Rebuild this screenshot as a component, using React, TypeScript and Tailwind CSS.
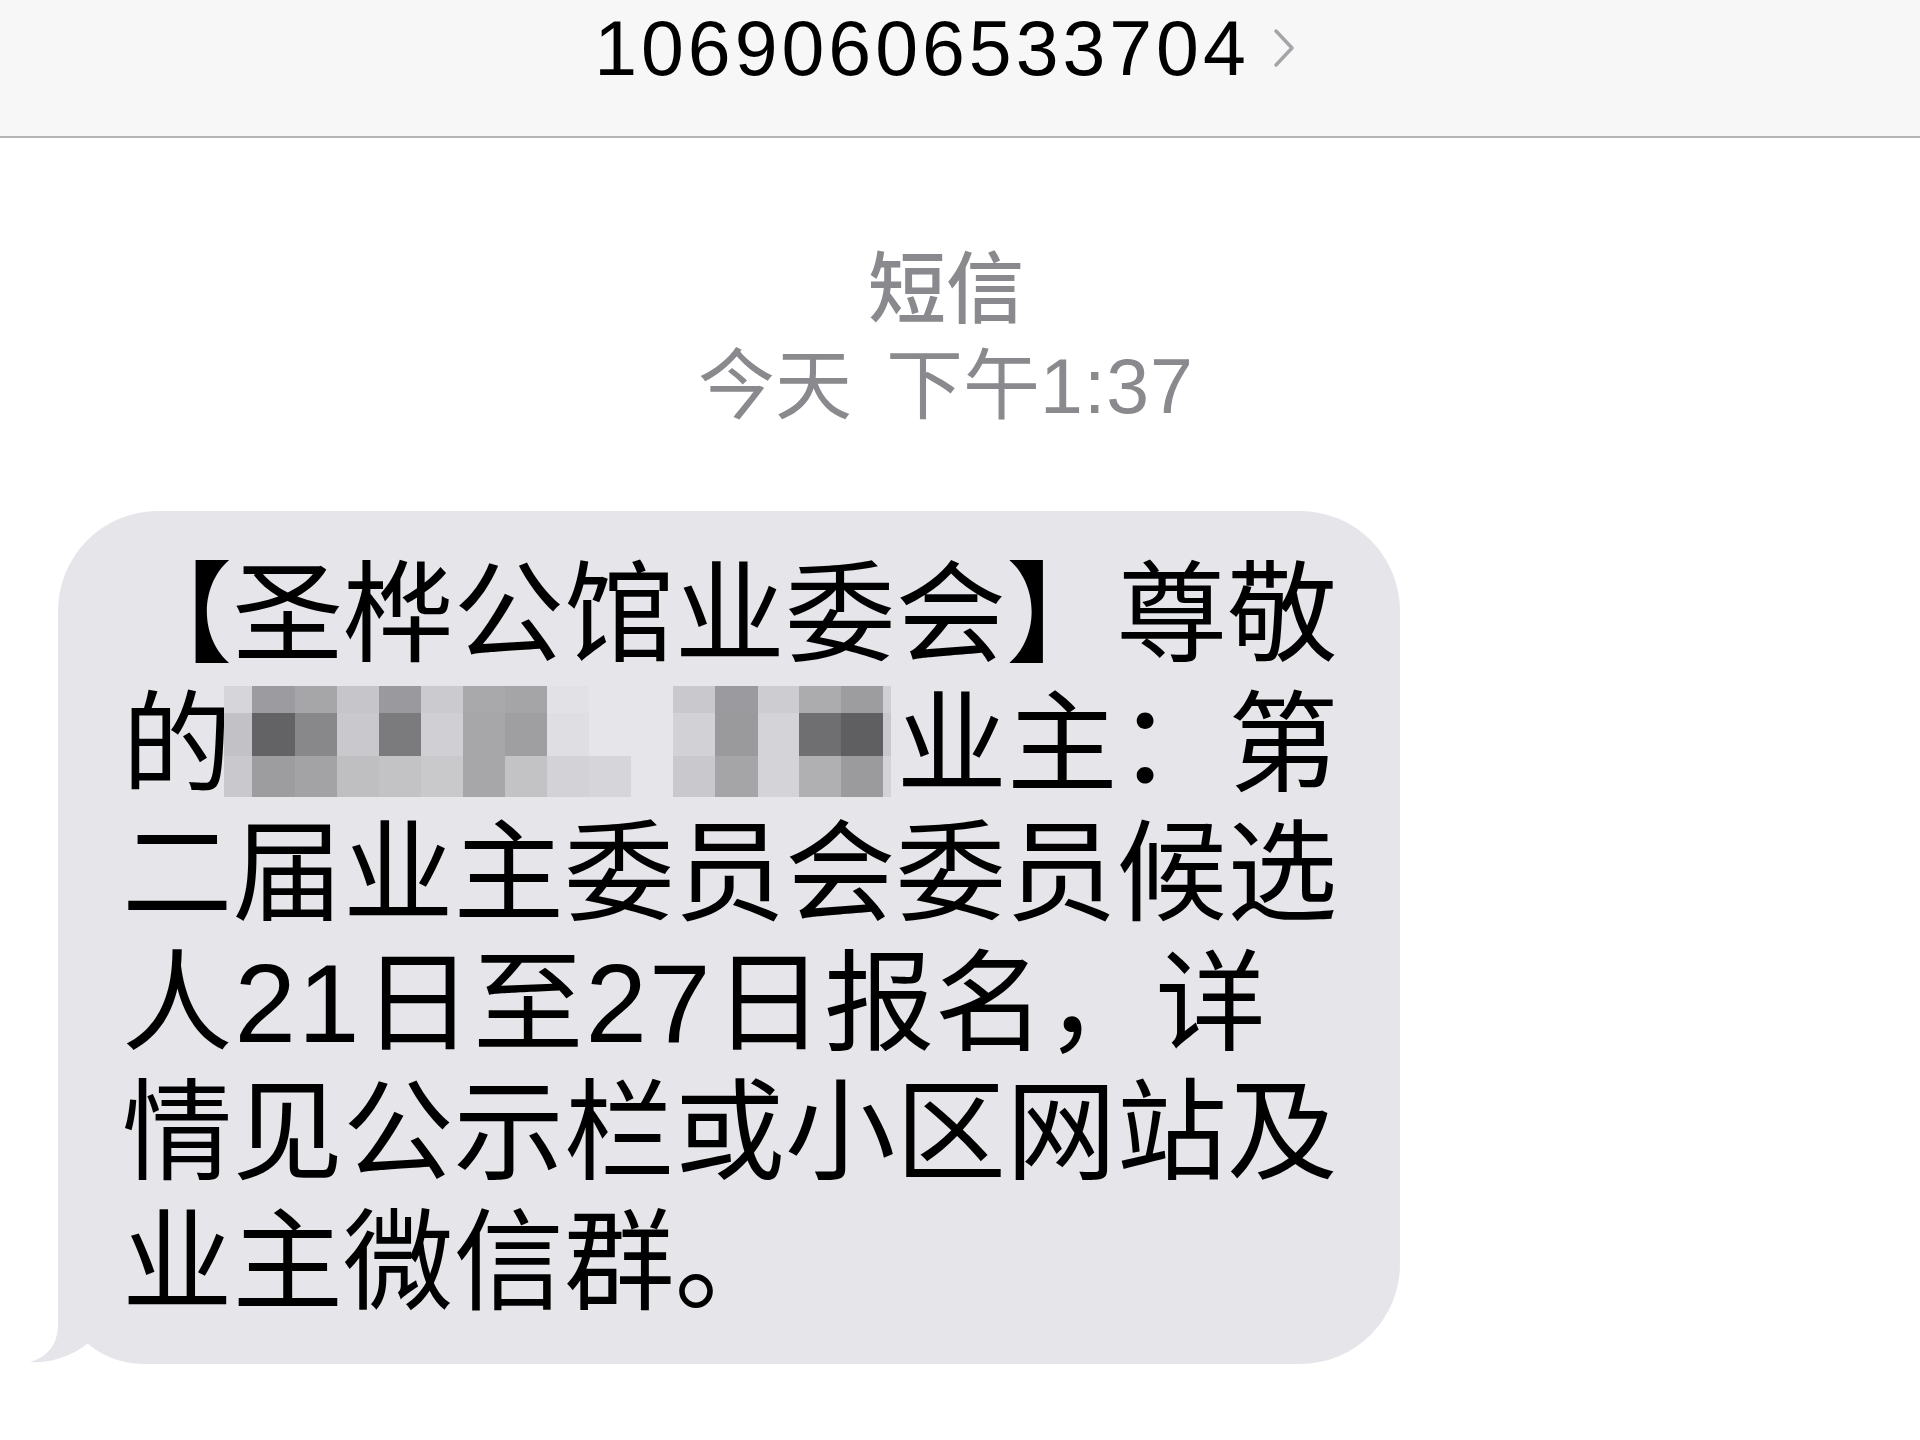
const COLS = [
  "w-[28px]", "w-[43px]", "w-[42px]", "w-[42px]", "w-[42px]", "w-[42px]",
  "w-[42px]", "w-[42px]", "w-[42px]", "w-[42px]", "w-[42px]", "w-[42px]",
  "w-[43px]", "w-[41px]", "w-[42px]", "w-[42px]", "w-[8px]",
];

const MOSAIC = [
  {
    h: "h-[27px]",
    bg: [
      "bg-[#d6d6da]", "bg-[#9c9ca0]", "bg-[#a6a6a9]", "bg-[#c6c6ca]", "bg-[#9a9a9e]", "bg-[#cbcbcf]",
      "bg-[#a9a9ac]", "bg-[#a5a5a8]", "bg-[#e2e2e6]", "bg-transparent", "bg-transparent", "bg-[#c9c9cd]",
      "bg-[#9b9b9f]", "bg-[#cdcdd1]", "bg-[#acacaf]", "bg-[#9d9da0]", "bg-[#d0d0d4]",
    ],
  },
  {
    h: "h-[43px]",
    bg: [
      "bg-[#c2c2c6]", "bg-[#636366]", "bg-[#88888b]", "bg-[#c9c9cd]", "bg-[#7b7b7e]", "bg-[#d0d0d4]",
      "bg-[#a7a7aa]", "bg-[#9f9fa2]", "bg-[#dfdfe3]", "bg-transparent", "bg-transparent", "bg-[#d2d2d6]",
      "bg-[#9a9a9d]", "bg-[#d4d4d8]", "bg-[#6f6f72]", "bg-[#5f5f62]", "bg-[#c9c9cd]",
    ],
  },
  {
    h: "h-[41px]",
    bg: [
      "bg-[#c9c9cd]", "bg-[#9d9da0]", "bg-[#a3a3a6]", "bg-[#bfbfc2]", "bg-[#c3c3c6]", "bg-[#c9c9cc]",
      "bg-[#a7a7aa]", "bg-[#c3c3c6]", "bg-[#d3d3d7]", "bg-[#d6d6da]", "bg-transparent", "bg-[#c9c9cd]",
      "bg-[#a5a5a8]", "bg-[#d4d4d8]", "bg-[#b0b0b3]", "bg-[#9b9b9e]", "bg-[#d4d4d8]",
    ],
  },
];

// pixelated name, blurred out in the screenshot
function Mosaic() {
  return (
    <span className="ml-[-9px] mr-[6px] mt-[6px] inline-flex w-[667px] flex-col align-top">
      {MOSAIC.map((row, r) => (
        <span key={r} className={`flex ${row.h}`}>
          {row.bg.map((bg, c) => (
            <span key={c} className={`${COLS[c]} ${bg} shrink-0`} />
          ))}
        </span>
      ))}
    </span>
  );
}

function Tail() {
  return (
    <svg
      className="absolute bottom-0 left-[-30px]"
      width="100"
      height="120"
      viewBox="0 0 100 120"
    >
      <path
        d="M30 5 L30 80 C30 100 20 113 2 118 C20 120 45 112 60 99 L75 70 L75 5 Z"
        fill="#e5e5ea"
      />
    </svg>
  );
}

const Num = ({ children }: { children: string }) => (
  <span className="ml-[2px] mr-[1px] tracking-[2px]">{children}</span>
);

export default function App() {
  return (
    <div className="min-h-[1440px] bg-white font-['Liberation_Sans','Noto_Sans_CJK_SC',sans-serif] [text-autospace:no-autospace] [text-spacing-trim:space-all]">
      <header className="h-[138px] border-b-2 border-[#b5b5b5] bg-[#f7f7f7]">
        <div className="flex items-center justify-center pr-[30px] pt-[4px]">
          <span className="text-[77px] leading-[88px] tracking-[4px] text-black">10690606533704</span>
          <svg className="ml-[22px]" width="24" height="40" viewBox="0 0 24 40">
            <path
              d="M4 3 L20 20 L4 37"
              stroke="#a5a5a9"
              strokeWidth="3.5"
              fill="none"
              strokeLinecap="round"
              strokeLinejoin="round"
            />
          </svg>
        </div>
      </header>

      <main className="pt-[104px]">
        <div className="flex flex-col items-center pr-[28px] text-[#8a8a8e]">
          <div className="text-[78px] font-medium leading-[96px]">短信</div>
          <div className="flex text-[77px] leading-[96px]">
            <span>今天</span>
            <span className="ml-[34px]">下午</span>
            <span className="tracking-[1px]">1:37</span>
          </div>
        </div>

        <div className="relative ml-[58px] mt-[77px] w-[1342px] rounded-[100px] rounded-bl-[85px] bg-[#e5e5ea] pb-[36px] pl-[64px] pt-[39px] text-[110.5px] leading-[129.6px] text-black">
          <div className="whitespace-nowrap">【圣桦公馆业委会】尊敬</div>
          <div className="whitespace-nowrap">
            的<Mosaic />业主：第
          </div>
          <div className="whitespace-nowrap">二届业主委员会委员候选</div>
          <div className="whitespace-nowrap">
            人<Num>21</Num>日至<Num>27</Num>日报名，详
          </div>
          <div className="whitespace-nowrap">情见公示栏或小区网站及</div>
          <div className="whitespace-nowrap">业主微信群。</div>
          <Tail />
        </div>
      </main>
    </div>
  );
}
